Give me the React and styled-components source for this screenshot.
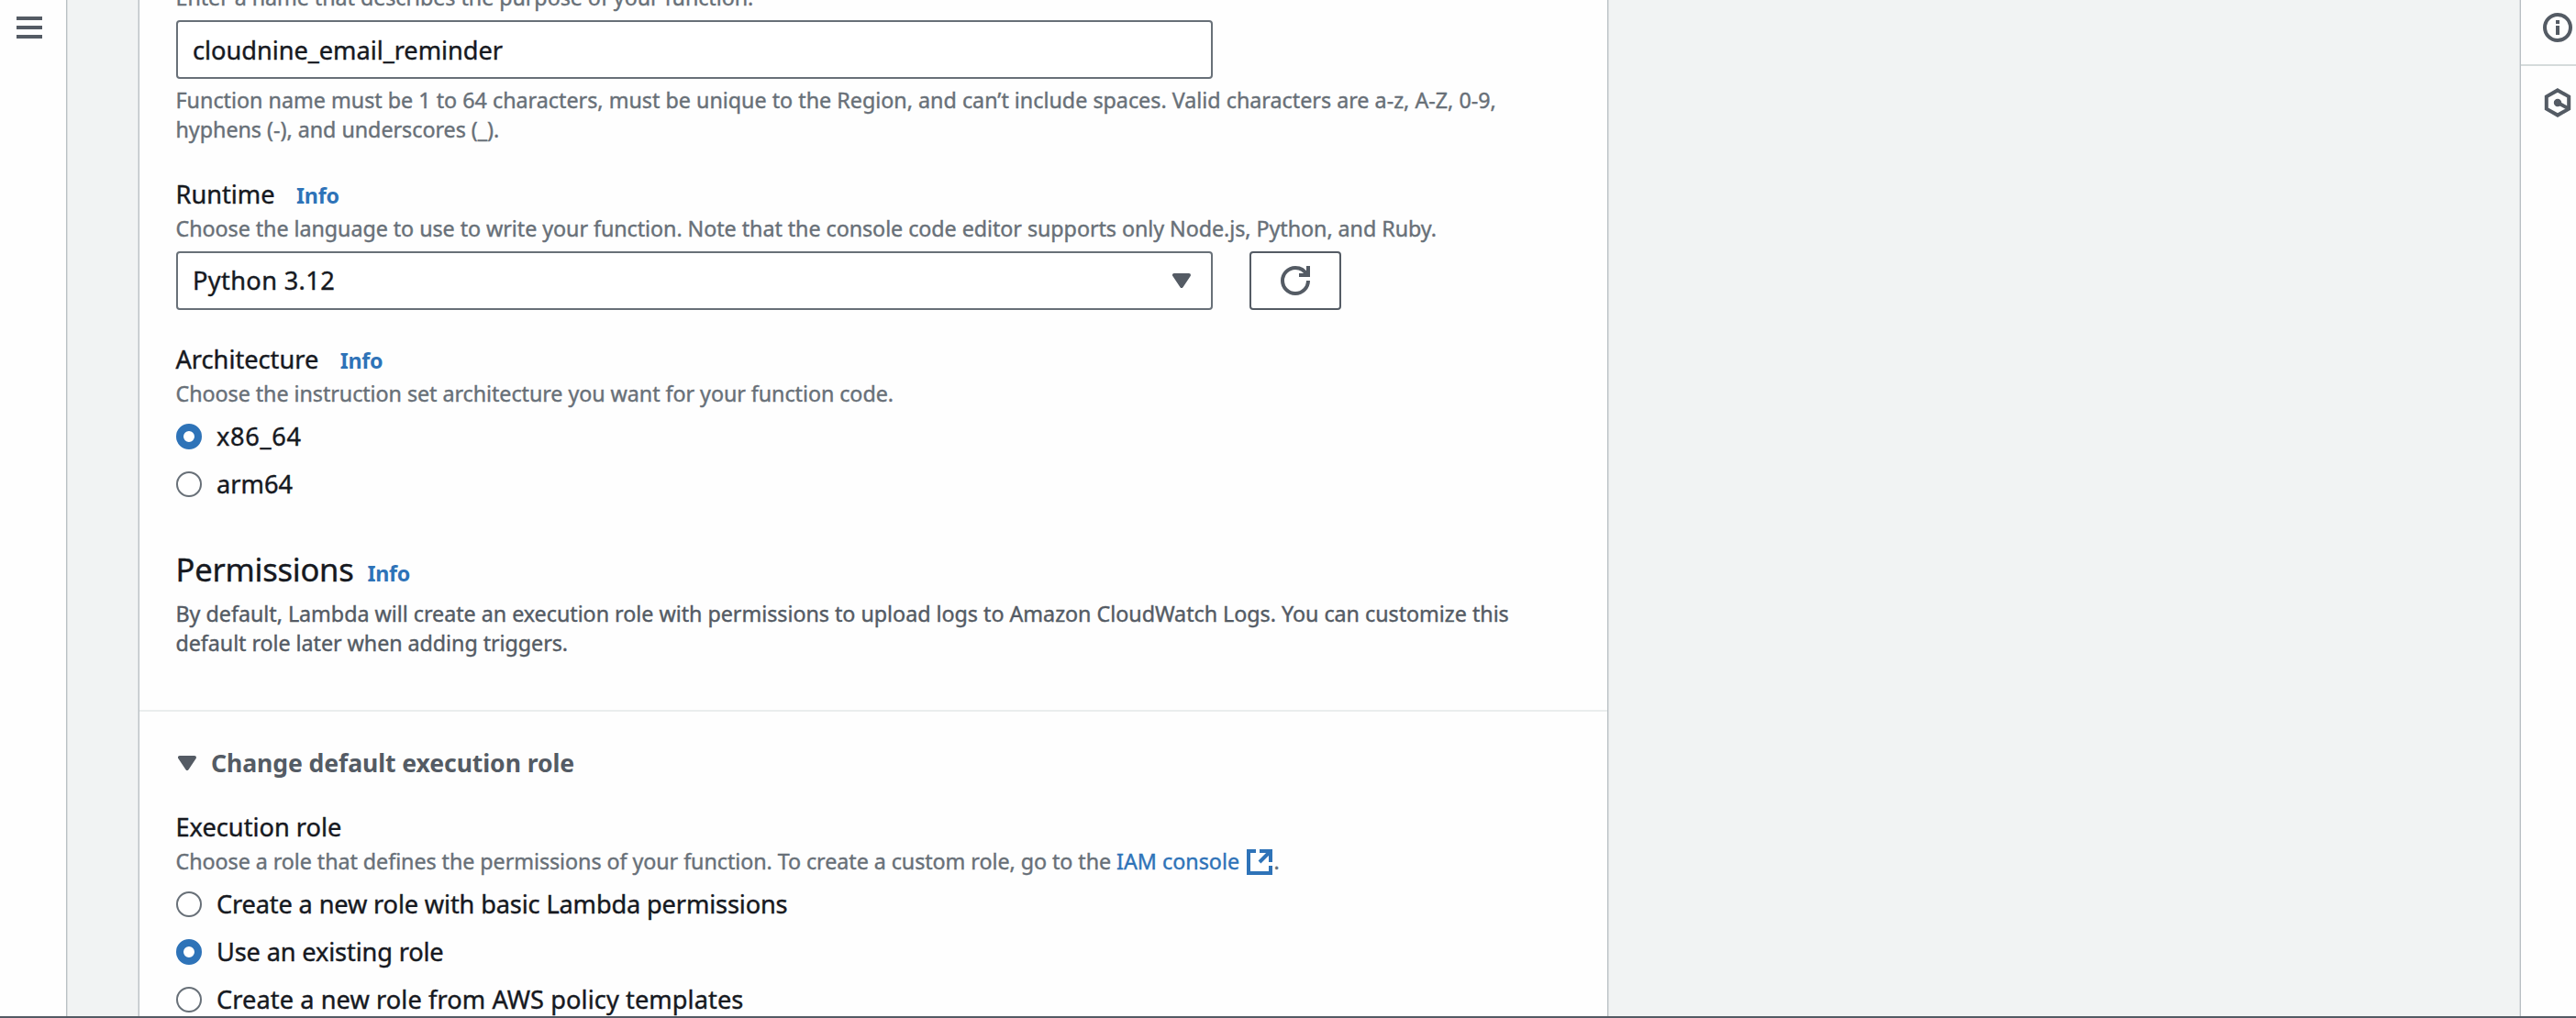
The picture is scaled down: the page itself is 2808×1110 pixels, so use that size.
import React from 'react';
import styled, { createGlobalStyle, css } from 'styled-components';

const color = {
  ink: '#16191f',
  body: '#545b64',
  hint: '#687078',
  blue: '#2e73b8',
  page: '#f1f3f3',
  surface: '#fefefe',
  edge: '#b9c0c4',
  edgeSoft: '#dcdfe1',
  rule: '#eaeded',
};

const GlobalStyle = createGlobalStyle`
  *, *::before, *::after { box-sizing: border-box; }
  body {
    margin: 0;
    background: ${color.page};
    color: ${color.ink};
    font-family: 'Noto Sans', 'Open Sans', sans-serif;
  }
`;

const Screen = styled.div`
  display: flex;
  flex-direction: column;
  height: 1110px;
  overflow: hidden;
`;

const Workspace = styled.div`
  display: flex;
  flex: 1;
  min-height: 0;
`;

const BottomBar = styled.footer`
  flex: none;
  height: 2px;
  position: relative;
  background: ${color.body};
  box-shadow: 0 -2px 16px rgba(0, 28, 36, 0.03);
`;

const NavRail = styled.nav`
  flex: none;
  width: 72px;
  padding: 18px 0 0 18px;
  background: ${color.surface};
  box-shadow: 1px 0 0 ${color.edge}, 2px 0 0 ${color.edgeSoft};
`;

const MenuButton = styled.button`
  display: flex;
  flex-direction: column;
  gap: 6px;
  width: 28px;
  padding: 0;
  border: 0;
  background: none;
`;

const MenuLine = styled.span`
  height: 4px;
  background: ${color.body};
`;

const Main = styled.main`
  flex: 1;
  min-width: 0;
  padding-left: 80px;
`;

const Panel = styled.section`
  width: 1600px;
  height: 100%;
  background: ${color.surface};
  box-shadow: -1px 0 0 ${color.edge}, 1px 0 0 ${color.edge},
    -2px 0 0 ${color.edgeSoft}, 2px 0 0 ${color.edgeSoft};
`;

const PanelBody = styled.div`
  display: flex;
  flex-direction: column;
  height: 776px;
  padding: 0 40px;
  border-bottom: 2px solid ${color.rule};
`;

const PanelFooter = styled.div`
  padding: 38px 40px 0;
  height: 332px;
  overflow: hidden;
`;

const Field = styled.div`
  margin-top: ${(p) => p.$top}px;
`;

const typeface = css`
  letter-spacing: ${(p) => p.$track || 0}px;
  white-space: pre;
  -webkit-text-stroke: 0.4px currentColor;
`;

const LabelRow = styled.div`
  display: flex;
  align-items: baseline;
  gap: ${(p) => p.$gap || 23.5}px;
  margin-left: -0.5px;
`;

const Label = styled.span`
  ${typeface}
  font-size: 27.2px;
  line-height: 39px;
`;

const Value = styled(Label)`
  margin-top: ${(p) => p.$nudge}px;
`;

const Heading = styled.h2`
  ${typeface}
  margin: 0;
  font-size: 34.5px;
  font-weight: 400;
  line-height: 47px;
`;

const InfoLink = styled.a`
  color: ${color.blue};
  font-size: 23.3px;
  font-weight: 700;
  line-height: 32px;
  letter-spacing: -0.3px;
`;

const Line = styled.span`
  ${typeface}
  display: block;
`;

const Hint = styled.div`
  margin: ${(p) => p.$top ?? 2}px 0 0 -0.5px;
  color: ${(p) => (p.$strong ? color.body : color.hint)};
  font-size: 23.3px;
  line-height: 32px;
`;

const ExternalLink = styled.a`
  color: ${color.blue};
  letter-spacing: 0;
`;

const ExternalGlyph = styled.svg`
  width: 32px;
  height: 32px;
  margin: -4px 0 -4px 5.5px;
  vertical-align: -4px;
  fill: none;
  stroke: ${color.blue};
  stroke-width: 2;
`;

const ControlRow = styled.div`
  display: flex;
  gap: 40px;
  margin-top: 9px;
`;

const Control = styled.div`
  display: flex;
  align-items: center;
  justify-content: space-between;
  width: 1130px;
  height: 64px;
  padding: 0 22px 0 16px;
  border: 2px solid ${color.hint};
  border-radius: 4px;
  background: #fff;
`;

const IconButton = styled.button`
  display: flex;
  align-items: center;
  justify-content: center;
  width: 100px;
  height: 64px;
  padding: 0;
  border: 2px solid ${color.body};
  border-radius: 4px;
  background: #fff;
`;

const Glyph = styled.svg`
  display: block;
  width: 32px;
  height: 32px;
  fill: none;
  stroke: ${color.body};
  stroke-width: 2;
`;

const Caret = styled.svg`
  display: block;
  width: 20px;
  height: 16px;
  fill: ${color.body};
  stroke: ${color.body};
  stroke-width: 2;
  stroke-linejoin: round;
`;

const RadioList = styled.div`
  display: flex;
  flex-direction: column;
  gap: 24px;
  margin-top: 17px;
`;

const RadioRow = styled.label`
  display: flex;
  gap: 16px;
  height: 28px;
`;

const RadioDot = styled.span`
  flex: none;
  width: 28px;
  height: 28px;
  border: ${(p) => (p.$on ? `8px solid ${color.blue}` : `2px solid ${color.hint}`)};
  border-radius: 50%;
  background: #fff;
`;

const RadioText = styled.span`
  ${typeface}
  font-size: 27.2px;
  line-height: 27px;
`;

const Disclosure = styled.div`
  display: flex;
  align-items: flex-start;
  gap: 16px;
  padding-left: 2px;
  color: ${color.body};
`;

const DisclosureCaret = styled(Caret)`
  margin-top: 10px;
`;

const DisclosureTitle = styled.span`
  letter-spacing: -0.1px;
  white-space: pre;
  font-size: 26.6px;
  font-weight: 700;
  line-height: 36px;
`;

const ToolRail = styled.aside`
  flex: none;
  width: 60px;
  background: ${color.surface};
  box-shadow: -1px 0 0 ${color.edge}, -2px 0 0 ${color.edgeSoft};
`;

const Tool = styled.div`
  padding: ${(p) => p.$top}px 0 24px 24px;
  border-bottom: ${(p) => (p.$last ? 'none' : '2px solid #d5dbdb')};
`;

function CaretIcon({ as: As = Caret }) {
  return (
    <As viewBox="3 4 10 8">
      <path d="M4 5h8l-4 6z" />
    </As>
  );
}

function Radio({ on, track, children }) {
  return (
    <RadioRow>
      <RadioDot $on={on} />
      <RadioText $track={track}>{children}</RadioText>
    </RadioRow>
  );
}

export default function App() {
  return (
    <>
      <GlobalStyle />
      <Screen>
        <Workspace>
          <NavRail>
            <MenuButton aria-label="Open navigation">
              <MenuLine />
              <MenuLine />
              <MenuLine />
            </MenuButton>
          </NavRail>

          <Main>
            <Panel>
              <PanelBody>
                <Field $top={-19}>
                  <Hint $top={0}>
                    <Line $track={-0.06}>Enter a name that describes the purpose of your function.</Line>
                  </Hint>
                  <ControlRow>
                    <Control>
                      <Value $nudge={1} $track={-0.03}>cloudnine_email_reminder</Value>
                    </Control>
                  </ControlRow>
                  <Hint $top={7}>
                    <Line>Function name must be 1 to 64 characters, must be unique to the Region, and can’t include spaces. Valid characters are a-z, A-Z, 0-9,</Line>
                    <Line $track={-0.03}>hyphens (-), and underscores (_).</Line>
                  </Hint>
                </Field>

                <Field $top={35}>
                  <LabelRow>
                    <Label>Runtime</Label>
                    <InfoLink>Info</InfoLink>
                  </LabelRow>
                  <Hint>
                    <Line $track={-0.06}>Choose the language to use to write your function. Note that the console code editor supports only Node.js, Python, and Ruby.</Line>
                  </Hint>
                  <ControlRow>
                    <Control>
                      <Value $nudge={-1} $track={0.35}>Python 3.12</Value>
                      <CaretIcon />
                    </Control>
                    <IconButton aria-label="Refresh runtimes">
                      <Glyph viewBox="0 0 16 16">
                        <path d="M15 8a7 7 0 1 1-7-7c2.8 0 5.2 1.6 6.3 4" />
                        <path d="M15 0v5h-5" />
                      </Glyph>
                    </IconButton>
                  </ControlRow>
                </Field>

                <Field $top={34}>
                  <LabelRow>
                    <Label>Architecture</Label>
                    <InfoLink>Info</InfoLink>
                  </LabelRow>
                  <Hint>
                    <Line $track={-0.06}>Choose the instruction set architecture you want for your function code.</Line>
                  </Hint>
                  <RadioList>
                    <Radio on track={0.7}>x86_64</Radio>
                    <Radio>arm64</Radio>
                  </RadioList>
                </Field>

                <Field $top={55}>
                  <LabelRow $gap={15}>
                    <Heading $track={-0.22}>Permissions</Heading>
                    <InfoLink>Info</InfoLink>
                  </LabelRow>
                  <Hint $strong $top={9}>
                    <Line $track={-0.03}>By default, Lambda will create an execution role with permissions to upload logs to Amazon CloudWatch Logs. You can customize this</Line>
                    <Line $track={-0.06}>default role later when adding triggers.</Line>
                  </Hint>
                </Field>
              </PanelBody>

              <PanelFooter>
                <Disclosure>
                  <CaretIcon as={DisclosureCaret} />
                  <DisclosureTitle>Change default execution role</DisclosureTitle>
                </Disclosure>
                <Field $top={32}>
                  <LabelRow>
                    <Label>Execution role</Label>
                  </LabelRow>
                  <Hint>
                    <Line $track={-0.065}>
                      Choose a role that defines the permissions of your function. To create a custom role, go to the{' '}
                      <ExternalLink>
                        IAM console
                        <ExternalGlyph viewBox="0 0 16 16">
                          <path d="M6 2H2v12h12v-4M8 2h6v6M14 2 8 8" />
                        </ExternalGlyph>
                      </ExternalLink>
                      .
                    </Line>
                  </Hint>
                  <RadioList>
                    <Radio track={-0.15}>Create a new role with basic Lambda permissions</Radio>
                    <Radio on track={-0.15}>Use an existing role</Radio>
                    <Radio track={0.08}>Create a new role from AWS policy templates</Radio>
                  </RadioList>
                </Field>
              </PanelFooter>
            </Panel>
          </Main>

          <ToolRail>
            <Tool $top={14}>
              <Glyph viewBox="0 0 16 16">
                <circle cx="8" cy="8" r="7" />
                <path d="M8 4v2M8 7v5" />
              </Glyph>
            </Tool>
            <Tool $top={24} $last>
              <Glyph viewBox="0 0 16 16">
                <path d="M8 1.2l6.1 3.45v6.7L8 14.8l-6.1-3.45v-6.7z" />
                <path d="M8 8l5.6 3" />
                <circle cx="8" cy="8" r="1.1" />
              </Glyph>
            </Tool>
          </ToolRail>
        </Workspace>
        <BottomBar />
      </Screen>
    </>
  );
}
